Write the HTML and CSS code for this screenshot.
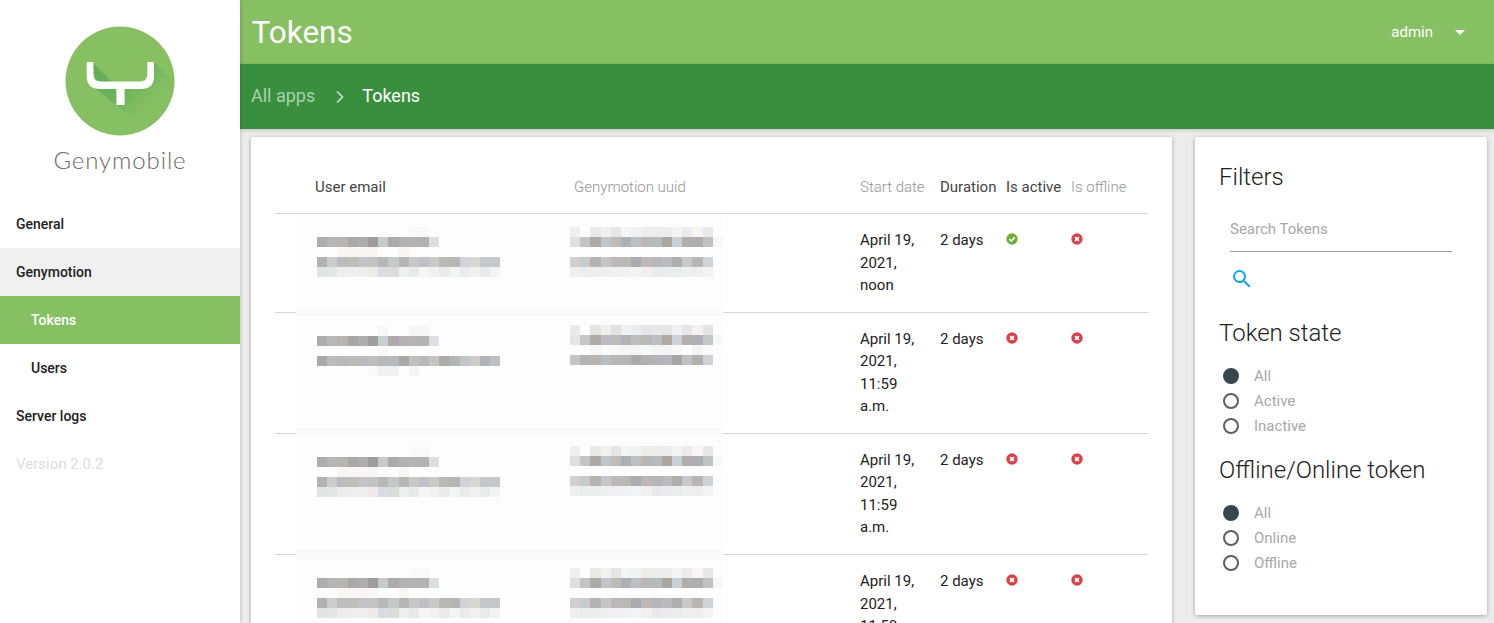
FILE: index.html
```html
<!DOCTYPE html>
<html lang="en">
<head>
<meta charset="utf-8">
<title>Tokens</title>
<link rel="stylesheet" href="styles.css">
</head>
<body>
<svg class="sprite" width="0" height="0" aria-hidden="true">
  <symbol id="ok" viewBox="0 0 12 12"><circle cx="6" cy="6" r="5.7" fill="#6cb02f"/><path d="M3.3 6.1 5.2 8 8.8 4.4" fill="none" stroke="#fff" stroke-width="1.7"/></symbol>
  <symbol id="no" viewBox="0 0 12 12"><circle cx="6" cy="6" r="5.7" fill="#d8434b"/><path d="M4.1 4.1 7.9 7.9M7.9 4.1 4.1 7.9" fill="none" stroke="#fff" stroke-width="1.8"/></symbol>
</svg>
<aside class="sidebar">
  <div class="brand">
    <svg class="brand-mark" width="110" height="110" viewBox="65 26 110 110" aria-hidden="true">
      <defs>
        <clipPath id="disc"><circle cx="120" cy="81" r="54.5"/></clipPath>
        <linearGradient id="fall" gradientUnits="userSpaceOnUse" x1="105" y1="72" x2="152" y2="120">
          <stop offset="0" stop-color="#62ad5a" stop-opacity=".95"/>
          <stop offset=".45" stop-color="#66b05b" stop-opacity=".75"/>
          <stop offset="1" stop-color="#87c062" stop-opacity="0"/>
        </linearGradient>
      </defs>
      <circle cx="120" cy="81" r="54.5" fill="#87c062"/>
      <path clip-path="url(#disc)" d="M93 63 112 82H147V62H154L194 102 160 140 116 105 96 89Z" fill="url(#fall)"/>
      <path d="M86.7 62H93.4V74Q93.4 81.5 101 81.5H140Q147.3 81.5 147.3 74V62H154V76Q154 89 141 89H124.6V105H116.4V89H100Q86.7 89 86.7 76Z" fill="#fff"/>
    </svg>
    <div class="brand-name">Genymobile</div>
  </div>
  <nav class="nav">
    <a class="nav-item">General</a>
    <a class="nav-item nav-open">Genymotion</a>
    <a class="nav-item nav-sub nav-active">Tokens</a>
    <a class="nav-item nav-sub">Users</a>
    <a class="nav-item">Server logs</a>
    <span class="nav-item nav-version">Version 2.0.2</span>
  </nav>
</aside>
<div class="main">
  <header class="topbar">
    <h1 class="title">Tokens</h1>
    <div class="user"><span>admin</span><span class="caret"></span></div>
  </header>
  <div class="crumbs">
    <a class="crumb-link">All apps</a>
    <svg class="crumb-sep" width="10" height="14" viewBox="0 0 10 14" aria-hidden="true"><path d="M2 1.5 7.5 7 2 12.5" fill="none" stroke="#cfe5d0" stroke-width="1.6"/></svg>
    <span class="crumb-current">Tokens</span>
  </div>
  <div class="content">
    <section class="card table-card">
      <div class="grid-row head">
        <div class="h-dark h-email">User email</div>
        <div class="h-muted">Genymotion uuid</div>
        <div class="h-muted">Start date</div>
        <div class="h-dark">Duration</div>
        <div class="h-dark">Is active</div>
        <div class="h-muted">Is offline</div>
      </div>

      <div class="grid-row row">
        <div class="mosaic email">
          <div class="px l12 ea0"></div><div class="px l12 ea1"></div><div class="px l12 ea2"></div><div class="px l18 ea3"></div><div class="px l18 ea4"></div>
        </div>
        <div class="mosaic uuid">
          <div class="px l15 ua1"></div><div class="px l15 ua2"></div><div class="px l15"></div><div class="px l15 ua4"></div><div class="px l15 ua5"></div>
        </div>
        <div class="cell date">April 19, 2021, noon</div>
        <div class="cell">2 days</div>
        <div class="cell icon"><svg width="12" height="12"><use href="#ok"/></svg></div>
        <div class="cell icon"><svg width="12" height="12"><use href="#no"/></svg></div>
      </div>

      <div class="grid-row row">
        <div class="mosaic email">
          <div class="px l12 eb0"></div><div class="px l12 eb1"></div><div class="px l12 eb2"></div><div class="px l18 eb3"></div><div class="px l18 eb4"></div>
        </div>
        <div class="mosaic uuid">
          <div class="px l15 ub1"></div><div class="px l15 ub2"></div><div class="px l15 ub3"></div><div class="px l15 ub4"></div>
        </div>
        <div class="cell date">April 19, 2021, 11:59 a.m.</div>
        <div class="cell">2 days</div>
        <div class="cell icon"><svg width="12" height="12"><use href="#no"/></svg></div>
        <div class="cell icon"><svg width="12" height="12"><use href="#no"/></svg></div>
      </div>

      <div class="grid-row row">
        <div class="mosaic email">
          <div class="px l12 ea0"></div><div class="px l12 ea1"></div><div class="px l12 ea2"></div><div class="px l18 ea3"></div><div class="px l18 ea4"></div>
        </div>
        <div class="mosaic uuid">
          <div class="px l15 ua1"></div><div class="px l15 ua2"></div><div class="px l15"></div><div class="px l15 ua4"></div><div class="px l15 ua5"></div>
        </div>
        <div class="cell date">April 19, 2021, 11:59 a.m.</div>
        <div class="cell">2 days</div>
        <div class="cell icon"><svg width="12" height="12"><use href="#no"/></svg></div>
        <div class="cell icon"><svg width="12" height="12"><use href="#no"/></svg></div>
      </div>

      <div class="grid-row row">
        <div class="mosaic email">
          <div class="px l12 ea0"></div><div class="px l12 ea1"></div><div class="px l12 ea2"></div><div class="px l18 ea3"></div><div class="px l18 ea4"></div>
        </div>
        <div class="mosaic uuid">
          <div class="px l15 ua1"></div><div class="px l15 ua2"></div><div class="px l15"></div><div class="px l15 ua4"></div><div class="px l15 ua5"></div>
        </div>
        <div class="cell date">April 19, 2021, 11:59 a.m.</div>
        <div class="cell">2 days</div>
        <div class="cell icon"><svg width="12" height="12"><use href="#no"/></svg></div>
        <div class="cell icon"><svg width="12" height="12"><use href="#no"/></svg></div>
      </div>
    </section>

    <aside class="card filters">
      <h2 class="filter-title">Filters</h2>
      <div class="search-field">Search Tokens</div>
      <button class="search-btn" type="button" aria-label="Search">
        <svg width="24" height="24" viewBox="0 0 24 24" aria-hidden="true"><path d="M15.5 14h-.79l-.28-.27A6.47 6.47 0 0 0 16 9.5 6.5 6.5 0 1 0 9.5 16c1.61 0 3.09-.59 4.23-1.57l.27.28v.79l5 4.99L20.49 19l-4.99-5zm-6 0C7.01 14 5 11.99 5 9.5S7.01 5 9.5 5 14 7.01 14 9.5 11.99 14 9.5 14z" fill="#0ea5e9"/></svg>
      </button>
      <h2 class="filter-title group-title">Token state</h2>
      <ul class="radios">
        <li class="radio"><span class="dot dot-on"></span>All</li>
        <li class="radio"><span class="dot"></span>Active</li>
        <li class="radio"><span class="dot"></span>Inactive</li>
      </ul>
      <h2 class="filter-title group-title-2">Offline/Online token</h2>
      <ul class="radios">
        <li class="radio"><span class="dot dot-on"></span>All</li>
        <li class="radio"><span class="dot"></span>Online</li>
        <li class="radio"><span class="dot"></span>Offline</li>
      </ul>
    </aside>
  </div>
</div>
</body>
</html>
```

FILE: styles.css
```css
* { box-sizing: border-box; }
html, body { height: 100%; }
body {
  margin: 0;
  display: flex;
  height: 623px;
  overflow: hidden;
  background: #ececec;
  color: #212121;
  font-family: Roboto, "Liberation Sans", sans-serif;
  font-size: 15px;
}
.sprite { position: absolute; }

/* sidebar */
.sidebar {
  flex: 0 0 240px;
  width: 240px;
  background: #fff;
  box-shadow: 0 0 4px rgba(0,0,0,.25);
  position: relative;
  z-index: 3;
}
.brand {
  height: 200px;
  padding-top: 26px;
  display: flex;
  flex-direction: column;
  align-items: center;
}
.brand-mark { display: block; }
.brand-name {
  margin-top: 8px;
  font-family: Lato, sans-serif;
  font-weight: 300;
  font-size: 24px;
  line-height: 32px;
  letter-spacing: .9px;
  color: #6a6a6a;
}
.nav { display: flex; flex-direction: column; }
.nav-item {
  height: 48px;
  line-height: 48px;
  padding-left: 16px;
  font-weight: 500;
  font-size: 14px;
  color: #212121;
}
.nav-open { background: #f0f0f0; }
.nav-sub { padding-left: 31px; }
.nav-active { background: #87c062; color: #fff; }
.nav-version { color: #dcdcdc; font-weight: 400; font-size: 15px; }

/* header */
.main { flex: 1; min-width: 0; display: flex; flex-direction: column; }
.topbar {
  height: 64px;
  flex: none;
  background: #87c062;
  color: #fff;
  display: flex;
  align-items: center;
  justify-content: space-between;
  padding: 0 29px 0 11.5px;
}
.title { margin: 0; font-size: 31.5px; font-weight: 400; }
.user { display: flex; align-items: center; gap: 22px; font-size: 15px; }
.caret {
  width: 0; height: 0;
  border-left: 5px solid transparent;
  border-right: 5px solid transparent;
  border-top: 5px solid #fff;
}
.crumbs {
  height: 65px;
  flex: none;
  background: #3a8f3e;
  display: flex;
  align-items: center;
  padding: 0 0 2px 11px;
  font-size: 18px;
  box-shadow: 0 1px 4px rgba(0,0,0,.2);
  position: relative;
  z-index: 2;
}
.crumb-link { color: #a9d2ac; }
.crumb-sep { margin: 2px 17px 0 20px; }
.crumb-current { color: #fff; }

/* content */
.content {
  flex: 1;
  min-height: 0;
  display: flex;
  align-items: flex-start;
  gap: 23px;
  padding: 8px 7px 0 11px;
}
.card {
  background: #fff;
  border-radius: 2px;
  box-shadow: 0 1px 4px rgba(0,0,0,.3);
}
.table-card { flex: 0 0 921px; padding: 24px 24px 0; height: 700px; }

/* table */
.grid-row {
  display: grid;
  grid-template-columns: 299px 286px 80px 66px 65px 77px;
  border-bottom: 1px solid #d6d6d6;
}
.head { height: 53px; align-items: center; line-height: 20px; }
.h-email { padding-left: 40px; }
.h-dark { color: #444; }
.h-muted { color: #959595; font-weight: 300; }
.row { position: relative; }
.row::before {
  content: "";
  position: absolute;
  left: 21px;
  width: 427px;
  top: 5px;
  bottom: -5px;
  background: linear-gradient(0deg, #fafafa 0 10px, #fdfdfd 0);
}
.head + .row::before { top: 0; }
.cell {
  position: relative;
  padding-top: 15px;
  padding-bottom: 15.2px;
  line-height: 22.5px;
  color: #212121;
}
.date { padding-right: 20px; }
.icon { padding-top: 0; line-height: 0; }
.icon svg { margin-top: 19px; }
.mosaic { position: relative; padding-top: 13px; filter: blur(.6px); }
.email { padding-left: 41.7px; }
.uuid { margin-left: -4px; padding-top: 12.6px; }
.px { height: 10px; }
.l12 { width: 122.4px; }
.l15 { width: 153px; }
.l18 { width: 183.6px; }

.ea0 { background: linear-gradient(90deg, transparent 0 91.8px, #f9f9f9 0 112.2px, transparent 0); }
.ea1 { background: linear-gradient(90deg, #adadad 0 10.2px, #b6b6b6 0 20.4px, #b8b5b0 0 30.6px, #a9a9ab 0 40.8px, #adadad 0 51px, #9e9c9c 0 61.2px, #c5cbca 0 71.4px, #aeaaab 0 81.6px, #b2b2b4 0 91.8px, #b6b3b0 0 102px, #b2b2b2 0 112.2px, #dcdfe2 0); }
.ea2 { background: linear-gradient(90deg, transparent 0 20.4px, #f8f7f5 0 61.2px, transparent 0 81.6px, #f8f6f5 0 91.8px, transparent 0); }
.ea3 { background: linear-gradient(90deg, #b2b2b4 0 10.2px, #ccccca 0 20.4px, #bcbdc0 0 30.6px, #c1bdb9 0 40.8px, #c2c4c8 0 51px, #c6c2c0 0 61.2px, #b8b8b8 0 71.4px, #c4c8c6 0 81.6px, #b6b6b6 0 91.8px, #cac7c4 0 102px, #c0c1c4 0 112.2px, #cacaca 0 122.4px, #bcb9b5 0 132.6px, #b8b6b3 0 142.8px, #d2d3d9 0 153px, #d9d6d0 0 163.2px, #c6c7cc 0 173.4px, #c6c8c8 0); }
.ea4 { background: linear-gradient(90deg, #e3e4e4 0 10.2px, #e4e6e6 0 20.4px, #eceeee 0 30.6px, #f0eeec 0 40.8px, #eceef0 0 51px, #eeeaea 0 61.2px, #d9dce0 0 71.4px, #dadcdc 0 81.6px, #edeeee 0 91.8px, #e8eaea 0 102px, #f5f7f7 0 112.2px, #f2f1ee 0 122.4px, #e9eaea 0 132.6px, #f3f4f4 0 142.8px, #eaebee 0 153px, #f1f0ee 0 163.2px, #e9eaee 0 173.4px, #f2f3f3 0); }

.eb0 { background: linear-gradient(90deg, transparent 0 61.2px, #f8f8f8 0 71.4px, transparent 0 91.8px, #f6f6f6 0 112.2px, transparent 0); }
.eb1 { background: linear-gradient(90deg, #adadad 0 10.2px, #b8b8b8 0 20.4px, #b8b5b0 0 30.6px, #a6a6a8 0 40.8px, #adadad 0 51px, #9e9e9c 0 61.2px, #c6ced0 0 71.4px, #aeaaab 0 81.6px, #b4b2b4 0 91.8px, #b6b3b0 0 102px, #b2b4b4 0 112.2px, #dcdfe4 0); }
.eb2 { background: linear-gradient(90deg, transparent 0 61.2px, #f8f8f8 0 71.4px, transparent 0); }
.eb3 { background: linear-gradient(90deg, #a9a9ab 0 10.2px, #bcbcbc 0 20.4px, #b8b9bc 0 30.6px, #bdb9b5 0 40.8px, #b9bcbf 0 51px, #c0bcba 0 61.2px, #b8b8ba 0 71.4px, #b8babc 0 81.6px, #a8a8a8 0 91.8px, #c0bfbc 0 102px, #b6b8ba 0 112.2px, #c4c4c0 0 122.4px, #aeaba8 0 132.6px, #b4b6b4 0 142.8px, #c2c4ca 0 153px, #cfccc6 0 163.2px, #b0b4ba 0 173.4px, #bcc0c4 0); }
.eb4 { background: linear-gradient(90deg, transparent 0 51px, #fafafa 0 61.2px, #f0f0f0 0 81.6px, transparent 0 91.8px, #f4f4f4 0 102px, transparent 0); }

.ua1 { background: linear-gradient(90deg, #efefef 0 10.2px, #fefefe 0 20.4px, #e9e9ea 0 30.6px, #f2f1ef 0 40.8px, #e6e6e6 0 51px, #f4f5f4 0 61.2px, #f1f2f2 0 71.4px, #ededea 0 81.6px, #ececec 0 91.8px, #ededed 0 102px, #f4f4f5 0 112.2px, #ebebed 0 122.4px, #f6f5f1 0 132.6px, #e6e8ec 0 142.8px, transparent 0); }
.ua2 { background: linear-gradient(90deg, #dfdfdf 0 10.2px, #c4c4c4 0 20.4px, #aea9a5 0 30.6px, #c2c4c6 0 40.8px, #bdbcba 0 51px, #aeb0b4 0 61.2px, #bcc0c0 0 71.4px, #bab8b4 0 81.6px, #b6bbbd 0 91.8px, #ada7a2 0 102px, #c6d0d6 0 112.2px, #b4aeab 0 122.4px, #adadb2 0 132.6px, #c0c2bf 0 142.8px, #f5f7fa 0); }
.ua4 { background: linear-gradient(90deg, #d2cfcc 0 10.2px, #c8cacd 0 20.4px, #b6b2b2 0 30.6px, #c5c6ca 0 40.8px, #bcb9b7 0 51px, #bbb9b6 0 61.2px, #a9abb0 0 71.4px, #bdbab5 0 81.6px, #b6b6bc 0 91.8px, #b9bbbc 0 102px, #b0aeac 0 112.2px, #c6cacc 0 122.4px, #b9b5b0 0 132.6px, #ced3d8 0 142.8px, transparent 0); }
.ua5 { background: linear-gradient(90deg, #efefee 0 10.2px, #ebeded 0 20.4px, #ededee 0 30.6px, #eeeff1 0 40.8px, #f0f0f2 0 51px, #f1f1f3 0 61.2px, #f3f4f4 0 71.4px, #f0efed 0 81.6px, #e9eaeb 0 91.8px, #ebebee 0 102px, #ebecec 0 112.2px, #eeefef 0 122.4px, #eeeeec 0 132.6px, #f4f4f6 0 142.8px, transparent 0); }

.ub1 { background: linear-gradient(90deg, #ebebeb 0 10.2px, #fefefe 0 20.4px, #e4e4e4 0 30.6px, #efefed 0 40.8px, #e2e2e2 0 51px, #eef0f2 0 61.2px, #eceeee 0 71.4px, #e6e6e8 0 81.6px, #e8e8ea 0 91.8px, #e6e6e4 0 102px, #eef0f2 0 112.2px, #e6e6e8 0 122.4px, #f3f2ee 0 132.6px, #e2e4e8 0 142.8px, transparent 0); }
.ub2 { background: linear-gradient(90deg, #e6e6e6 0 10.2px, #c6c6c6 0 20.4px, #b0aba8 0 30.6px, #bcbcbe 0 40.8px, #bcbcbc 0 51px, #b0b2b6 0 61.2px, #bcbebe 0 71.4px, #bcb8b8 0 81.6px, #bcbec0 0 91.8px, #b0aaa6 0 102px, #ccd2d8 0 112.2px, #b4b0ae 0 122.4px, #b0b0b8 0 132.6px, #c6c8c8 0 142.8px, #f5f7fa 0); }
.ub3 { background: linear-gradient(90deg, transparent 0 20.4px, #f6f6f6 0 30.6px, #fafafa 0 40.8px, #f8f8f8 0 51px, #f5f5f5 0 71.4px, #f7f8f8 0 81.6px, #f4f4f4 0 91.8px, #f3f3f3 0 102px, #f6f6f6 0 112.2px, #fff 0 122.4px, #f5f5f3 0 132.6px, #f8f8f8 0 142.8px, transparent 0); }
.ub4 { background: linear-gradient(90deg, #c8c4c2 0 10.2px, #b0b4b6 0 20.4px, #b8b2b0 0 30.6px, #b8bec4 0 40.8px, #b6b6b8 0 51px, #b6b4b4 0 61.2px, #a8aaae 0 71.4px, #b6b0ac 0 81.6px, #b0b4bc 0 91.8px, #b4b6b8 0 102px, #a6a6a4 0 112.2px, #bcc2c4 0 122.4px, #b4b0ae 0 132.6px, #ccd2d8 0 142.8px, transparent 0); }

/* filters */
.filters { flex: 0 0 292px; padding: 24px 24px 40px; }
.filter-title {
  margin: 0;
  font-size: 24px;
  font-weight: 300;
  line-height: 32px;
  color: #212121;
}
.search-field {
  margin: 18px 11px 0;
  height: 41px;
  line-height: 36px;
  width: 222px;
  color: #a8a8a8;
  border-bottom: 1px solid #9a9a9a;
}
.search-btn {
  display: block;
  margin: 15px 0 0 11px;
  padding: 0;
  border: 0;
  background: none;
  height: 24px;
}
.search-btn svg { display: block; }
.group-title { margin-top: 26px; }
.group-title-2 { margin-top: 16px; }
.radios { list-style: none; margin: 14px 0 0; padding: 0; }
.radio {
  height: 25px;
  display: flex;
  align-items: center;
  padding-left: 4px;
  color: #a8a8a8;
}
.dot {
  width: 16px;
  height: 16px;
  margin-right: 15px;
  border-radius: 50%;
  border: 2px solid #5f5f5f;
  background: #fff;
}
.dot-on { background: #37474f; border-color: #37474f; }
```
